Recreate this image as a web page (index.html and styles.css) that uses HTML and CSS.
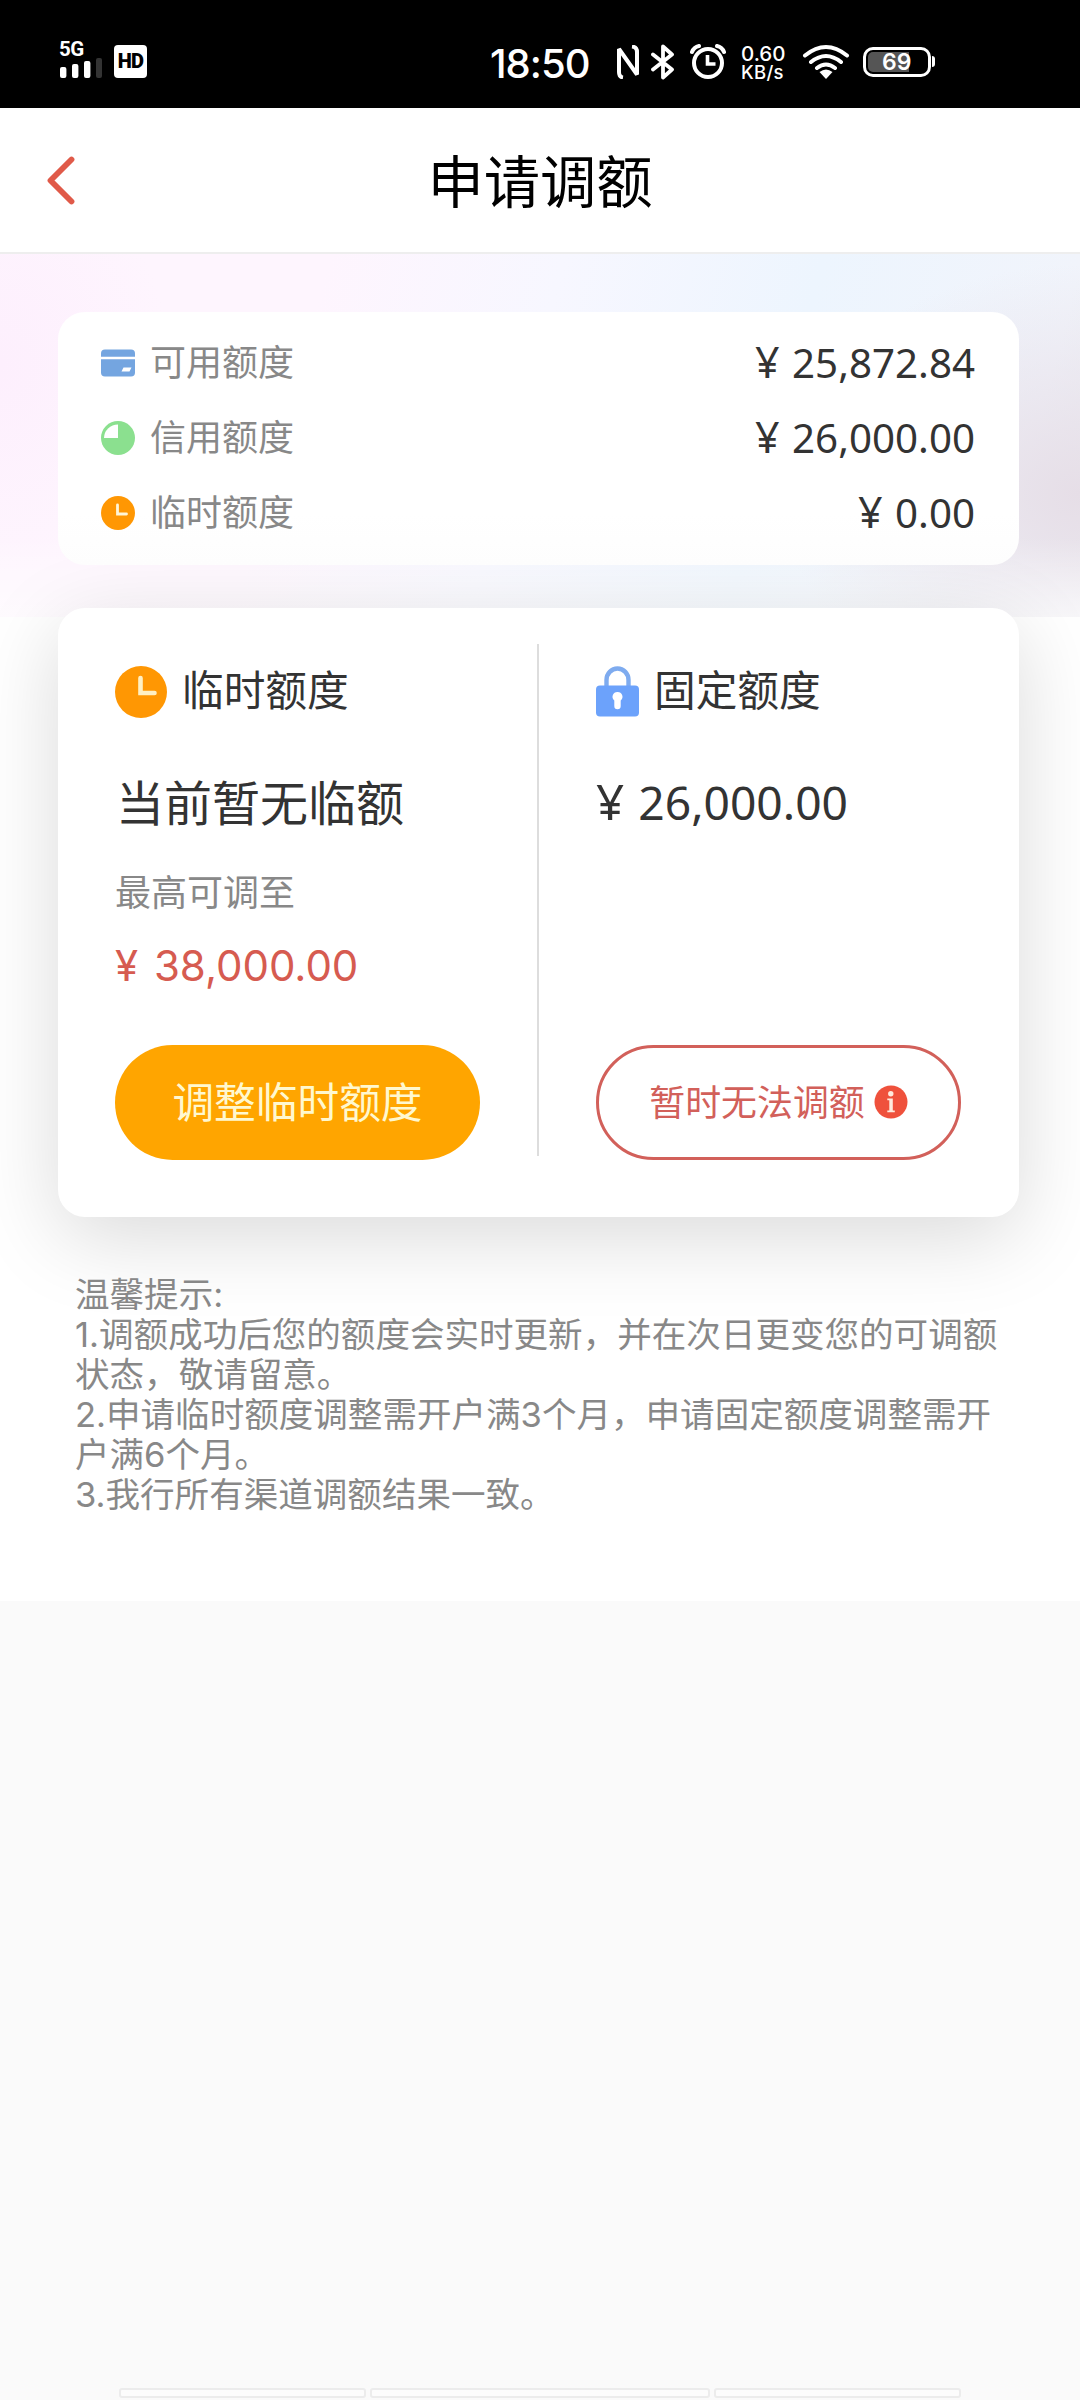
FILE: index.html
```html
<!DOCTYPE html>
<html lang="zh-CN">
<head>
<meta charset="utf-8">
<title>申请调额</title>
<link rel="stylesheet" href="styles.css">
</head>
<body>
<div class="status">
  <div class="signal">
    <span class="net">5G</span>
    <svg width="42" height="20" viewBox="0 0 42 20"><g fill="#fff"><rect y="9" width="6.4" height="11" rx="2"/><rect x="12" y="6" width="6.4" height="14" rx="2"/><rect x="24" y="3" width="6.4" height="17" rx="2"/></g><rect x="36" width="6" height="20" rx="2" fill="#333"/></svg>
  </div>
  <span class="hd">HD</span>
  <span class="time">18:50</span>
  <svg class="nfc" width="22" height="34" viewBox="0 0 22 34" fill="none" stroke="#fff" stroke-width="4"><path d="M6 32.500Q2 32 2 27V4l18 25.500V7Q20 2 15 1.500" stroke-linejoin="bevel"/></svg>
  <svg class="bt" width="24" height="36" viewBox="0 0 24 36" fill="none" stroke="#fff" stroke-width="3.800" stroke-linecap="round" stroke-linejoin="round"><path d="M2 10.500l19 15-9 8V2.500l9 8-19 15"/></svg>
  <svg class="alarm" width="36" height="36" viewBox="0 0 36 36" fill="none" stroke="#fff"><circle cx="18" cy="19" r="14" stroke-width="4"/><path d="M17.500 11v9h8" stroke-width="3.600"/><path d="M2 8Q4 3 9 2M34 8Q32 3 27 2" stroke-width="4" stroke-linecap="round"/></svg>
  <span class="speed"><span>0.60</span><span class="unit">KB/s</span></span>
  <svg class="wifi" width="48" height="36" viewBox="0 0 48 36" fill="none" stroke="#fff" stroke-width="4" stroke-linecap="round"><path d="M3 11.500Q24-5.500 45 11.500M9 18q15-12 30 0M15 24q9-7 18 0"/><path d="M17.500 28q6.500-5 13 0L24 35z" fill="#fff" stroke="none"/></svg>
  <span class="battery"><span class="level">69</span></span><span class="nub"></span>
</div>

<header class="nav">
  <svg class="back" width="30" height="50" viewBox="0 0 30 50" fill="none" stroke="#e05a49" stroke-width="5.800" stroke-linecap="round" stroke-linejoin="round"><path d="M26.500 4.500L5.500 25.500 26.500 46.500"/></svg>
  <h1>申请调额</h1>
</header>

<main>
  <section class="hero">
    <div class="summary">
      <div class="row">
        <svg width="34" height="34" viewBox="0 0 34 34"><rect y="3.500" width="34" height="27" rx="4" fill="#74a5e0"/><path d="M0 12h34" stroke="#fff" stroke-width="2.500"/><path d="M22.500 21.500h8l-2 4h-8z" fill="#fff"/></svg>
        <span class="label">可用额度</span><span class="amount"><span class="yen">¥</span> 25,872.84</span>
      </div>
      <div class="row">
        <svg width="34" height="34" viewBox="0 0 34 34"><circle cx="17" cy="17" r="17" fill="#8be08f"/><path d="M17 17V3.500A14 13.500 0 0 0 3 17z" fill="#fff"/></svg>
        <span class="label">信用额度</span><span class="amount"><span class="yen">¥</span> 26,000.00</span>
      </div>
      <div class="row">
        <svg width="34" height="34" viewBox="0 0 34 34"><circle cx="17" cy="17" r="17" fill="#ff9703"/><path d="M16.500 9v9h9" fill="none" stroke="#fff6d8" stroke-width="2.800" stroke-linecap="round"/></svg>
        <span class="label">临时额度</span><span class="amount"><span class="yen">¥</span> 0.00</span>
      </div>
    </div>
  </section>

  <section class="panel">
    <div class="col left">
      <div class="head">
        <svg width="52" height="52" viewBox="0 0 52 52"><circle cx="26" cy="26" r="26" fill="#ff9703"/><path d="M25.500 12v15h14" fill="none" stroke="#fff0c4" stroke-width="4.600" stroke-linecap="round"/></svg>
        <h2>临时额度</h2>
      </div>
      <p class="current">当前暂无临额</p>
      <p class="hint">最高可调至</p>
      <p class="max">¥ 38,000.00</p>
      <button class="btn primary">调整临时额度</button>
    </div>
    <div class="col right">
      <div class="head">
        <svg width="43" height="52" viewBox="0 0 43 52"><path d="M10.500 22V14a11 11.500 0 0 1 22 0v8" fill="none" stroke="#7eabef" stroke-width="4.400"/><rect y="19.500" width="43" height="31" rx="4" fill="#6ca2fb"/><path d="M21.500 26a4.800 4.800 0 0 1 3.200 8.500V40a3.200 3.200 0 0 1-6.400 0v-5.500A4.800 4.800 0 0 1 21.500 26z" fill="#fff"/></svg>
        <h2>固定额度</h2>
      </div>
      <p class="current money"><span class="yen">¥</span> 26,000.00</p>
      <button class="btn outline"><span>暂时无法调额</span>
        <svg width="34" height="34" viewBox="0 0 34 34"><circle cx="17" cy="17" r="16.500" fill="#ef513c"/><circle cx="16.800" cy="8.800" r="2.700" fill="#ffeade"/><path d="M13.300 13.500h5.500v12h2v1.800h-7.500v-1.800h2v-10.200h-2z" fill="#ffeade"/></svg>
      </button>
    </div>
  </section>

  <section class="tips">
    <p>温馨提示:</p>
    <p>1.调额成功后您的额度会实时更新，并在次日更变您的可调额<br>状态，敬请留意。</p>
    <p>2.申请临时额度调整需开户满3个月，申请固定额度调整需开<br>户满6个月。</p>
    <p>3.我行所有渠道调额结果一致。</p>
  </section>
</main>
<footer class="tabs"><span></span><span class="wide"></span><span></span></footer>
</body>
</html>
```
FILE: styles.css
```css
* { box-sizing: border-box; margin: 0; padding: 0; }
body {
  width: 1080px; height: 2400px; overflow: hidden;
  display: flex; flex-direction: column;
  background: #fafafa; color: #333;
  font-family: "Inter", "Noto Sans CJK SC", sans-serif;
}
svg { display: block; flex: none; }
h1, h2 { font-weight: 400; }

.status {
  height: 108px; flex: none; padding: 42px 0 0 60px;
  background: #000; color: #fff;
  display: flex; align-items: flex-start;
}
.signal { width: 42px; height: 36px; display: flex; flex-direction: column; justify-content: space-between; }
.net { margin-left: -1px; font: 700 20.500px/15px "Roboto", sans-serif; letter-spacing: -.5px; }
.signal svg { margin-top: -5px; }
.hd {
  width: 33px; height: 33px; margin: 3px 0 0 12px; border-radius: 4px;
  background: #fff; color: #000; text-align: center;
  font: 900 20px/33px "Roboto", sans-serif; letter-spacing: -.8px;
}
.time { width: 98px; margin: 1px 0 0 343px; font-size: 40px; line-height: 42px; font-weight: 500; letter-spacing: -1px; white-space: nowrap; }
.nfc { margin: 3px 0 0 29px; }
.bt { margin: 2px 0 0 12px; }
.alarm { margin: 2px 0 0 15px; }
.speed { width: 46px; margin: 2px 0 0 15px; display: flex; flex-direction: column; font: 500 20.500px/19px "Inter", sans-serif; }
.speed .unit { font-size: 18.500px; letter-spacing: .3px; }
.wifi { margin: 2px 0 0 15px; }
.battery { width: 68px; height: 30px; margin: 5px 0 0 13px; padding: 2px; border: 3px solid #fff; border-radius: 10px; }
.level { display: block; height: 20px; padding-left: 14px; border-radius: 5px; background: linear-gradient(90deg, #555 41px, transparent 41px); font-size: 23px; line-height: 21px; font-weight: 600; }
.nub { width: 3px; height: 11px; margin: 14px 0 0 1px; background: #fff; border-radius: 0 3px 3px 0; }

.nav {
  height: 146px; flex: none; padding: 0 45px;
  display: grid; grid-template-columns: 30px 1fr 30px; align-items: center;
  background: #fff; border-bottom: 2px solid #eee;
}
.nav h1 { padding-top: 5px; color: #000; text-align: center; font-size: 56.300px; line-height: 80px; }

main { height: 1347px; flex: none; background: #fff; }
.hero {
  height: 363px; padding: 58px 61px 0 58px;
  background:
    linear-gradient(180deg, transparent 78%, rgba(255,255,255,.65)),
    radial-gradient(ellipse 300px 230px at 1080px 240px, #e6dee7, rgba(230,222,231,0)),
    radial-gradient(ellipse 170px 210px at 0 110px, #fdeffd, rgba(253,239,253,0)),
    linear-gradient(105deg, #fef5fe 0%, #fef5fe 28%, #f7f7ff 48%, #edf5fe 70%, #f1f4fb 92%, #eeeff4 100%);
}
.summary { position: relative; z-index: 1; height: 253px; padding: 13px 44px 0 43px; border-radius: 27px; background: linear-gradient(#fff 80%, #fdfdfd); }
.row { height: 75px; display: flex; align-items: center; }
.label { margin-left: 15px; font-size: 36px; line-height: 50px; color: #888; }
.amount { margin-left: auto; font: 400 40.3px/56px "Noto Sans", sans-serif; word-spacing: 2px; }
.yen { font-size: 1.07em; line-height: 1; }

.panel {
  height: 609px; margin: -9px 61px 0 58px; padding: 36px 58px 56px 57px;
  position: relative; display: grid; grid-template-columns: 424px 1fr;
  background: #fff; border-radius: 27px; box-shadow: 0 20px 84px rgba(0,0,0,.15);
}
.col { display: flex; flex-direction: column; height: 516px; padding-top: 22px; }
.left { border-right: 2px solid #ddd; height: 512px; }
.right { padding-left: 57px; }
.head { display: flex; align-items: center; height: 52px; }
.head h2 { margin: -2px 0 0 15px; font-size: 41.700px; line-height: 52px; }
.current { height: 70px; margin-top: 51px; padding-left: 1px; font-size: 48px; line-height: 70px; white-space: nowrap; }
.money { padding-left: 0; font: 400 46.200px/68px "Noto Sans", sans-serif; word-spacing: 2px; }
.hint { margin-top: 29px; height: 50px; font-size: 36px; line-height: 50px; color: #888; }
.max { margin-top: 20px; height: 55px; font-size: 42px; line-height: 56px; font-weight: 400; color: #d65b50; word-spacing: 4px; }
.btn { flex: none; width: 365px; height: 115px; border: 0; border-radius: 58px; font-family: inherit; display: flex; align-items: center; justify-content: center; white-space: nowrap; }
.primary { margin-top: 52px; padding-bottom: 5px; background: #ffa500; color: #fff8cf; font-size: 41.700px; }
.outline { margin-top: 206px; padding-bottom: 2px; background: #fff; border: 3px solid #d2605a; color: #d2605a; font-size: 35.900px; gap: 9px; }
.outline span { padding-bottom: 4px; }

.tips { padding: 58px 60px 0 75px; color: #888; font-size: 34.560px; line-height: 40px; white-space: nowrap; position: relative; }

.tabs { margin-top: auto; height: 12px; padding: 0 119px 2px 119px; display: flex; gap: 4px; }
.tabs span { flex: 247; border: 2px solid #ececec; border-radius: 3px; background: #fcfcfc; }
.tabs .wide { flex: 340; }
```
